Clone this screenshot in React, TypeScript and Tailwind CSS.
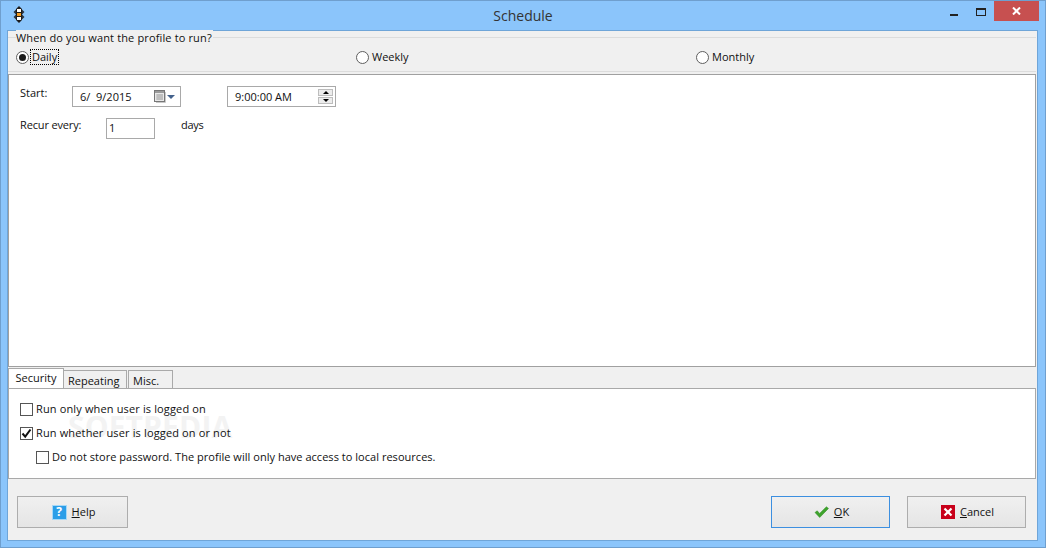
import React from 'react';

const font = "font-['Open_Sans','Noto_Sans',sans-serif]";

const Radio = ({ label, checked, focused, className }: { label: string; checked?: boolean; focused?: boolean; className?: string }) => (
  <div className={`flex items-center gap-[2px] ${className ?? ''}`}>
    <div className="w-[13px] h-[13px] rounded-full border border-[#5f5f5f] bg-white flex items-center justify-center shrink-0">
      {checked && <div className="w-[7px] h-[7px] rounded-full bg-[#1a1a1a]" />}
    </div>
    <span className={`px-[1px] leading-[14px] ${focused ? 'outline-1 outline-dotted outline-black' : ''}`}>{label}</span>
  </div>
);

const Checkbox = ({ label, checked, className }: { label: string; checked?: boolean; className?: string }) => (
  <div className={`relative z-10 flex items-center gap-[3px] h-[14px] ${className ?? ''}`}>
    <div className="w-[13px] h-[13px] border border-[#555] bg-white flex items-center justify-center shrink-0">
      {checked && (
        <svg width="11" height="11" viewBox="0 0 11 11">
          <path d="M1.5 5.5 L4.2 8.6 L9.5 1.5" fill="none" stroke="#111" strokeWidth="2" />
        </svg>
      )}
    </div>
    <span>{label}</span>
  </div>
);

const AppIcon = () => (
  <svg width="12" height="17" viewBox="0 0 12 17">
    <path d="M6 0 L9 3 L9 14 L6 17 L3 14 L3 3 Z" fill="#1c1c1c" />
    <path d="M0.5 6 L3 3.5 L3 8.5 Z M11.5 6 L9 3.5 L9 8.5 Z M0.5 11 L3 8.5 L3 13.5 Z M11.5 11 L9 8.5 L9 13.5 Z" fill="#2a3440" />
    <rect x="4" y="3" width="4" height="3" fill="#fff" />
    <rect x="4" y="7" width="4" height="3" fill="#f39a1e" />
    <rect x="4" y="11" width="4" height="3" fill="#fff" />
  </svg>
);

const CalendarIcon = () => (
  <svg width="12" height="13" viewBox="0 0 12 13">
    <rect x="0.5" y="0.5" width="10" height="11" fill="#e8e8e8" stroke="#777" />
    <rect x="1" y="1" width="9" height="2" fill="#9a9a9a" />
    <path d="M2 5 H9 M2 7 H9 M2 9 H9 M4 4 V10 M6 4 V10 M8 4 V10" stroke="#b0b0b0" strokeWidth="1" />
    <path d="M11.5 2 V12.5 H2" fill="none" stroke="#c8c8c8" />
  </svg>
);

const HelpIcon = () => (
  <div className="w-[15px] h-[15px] bg-[#2b9ee8] border border-[#a6d8f7] flex items-center justify-center text-white text-[12px] font-bold leading-none">?</div>
);

const CheckIcon = () => (
  <svg width="15" height="12" viewBox="0 0 15 12">
    <path d="M1 6.5 L3.2 4.8 L5.6 7.4 L12.4 0.8 L14.5 2.4 L5.7 11.5 Z" fill="#3ea32c" stroke="#2f8a20" strokeWidth="0.5" />
  </svg>
);

const CancelIcon = () => (
  <div className="w-[14px] h-[14px] bg-[#c8001a] flex items-center justify-center">
    <svg width="10" height="10" viewBox="0 0 10 10">
      <path d="M1.5 1.5 L8.5 8.5 M8.5 1.5 L1.5 8.5" stroke="#fff" strokeWidth="2.2" />
    </svg>
  </div>
);

const Spinner = () => (
  <div className="flex flex-col gap-[1px] w-[15px]">
    <div className="h-[7px] bg-[#ececec] border border-[#bdbdbd] flex items-center justify-center">
      <div className="w-0 h-0 border-x-[3px] border-x-transparent border-b-[3px] border-b-black" />
    </div>
    <div className="h-[7px] bg-[#ececec] border border-[#bdbdbd] flex items-center justify-center">
      <div className="w-0 h-0 border-x-[3px] border-x-transparent border-t-[3px] border-t-black" />
    </div>
  </div>
);

const ActionButton = ({ icon, letter, rest, className }: { icon: React.ReactNode; letter: string; rest: string; className?: string }) => (
  <div className={`h-[32px] flex items-center justify-center gap-[5px] pl-[2px] border bg-gradient-to-b from-[#f0f0f0] to-[#e5e5e5] ${className ?? ''}`}>
    {icon}
    <span><span className="underline">{letter}</span>{rest}</span>
  </div>
);

export default function App() {
  return (
    <div className={`${font} relative w-[1046px] h-[548px] bg-[#8bc5fb] border border-[#6f9fce] flex flex-col text-[11px] text-[#111] overflow-hidden`}>
      {/* Title bar */}
      <div className="h-[29px] shrink-0 flex items-start pl-[12px] pr-[6px]">
        <div className="mt-[5px]"><AppIcon /></div>
        <div className="flex-1 text-center text-[14px] leading-[30px] text-[#333] pl-[71px]">Schedule</div>
        <div className="flex items-start">
          <div className="w-[8px] h-[2px] bg-[#222] mt-[13px] mr-[18px]" />
          <div className="w-[10px] h-[8px] border border-[#222] border-t-2 mt-[7px] mr-[8px]" />
          <div className="w-[45px] h-[20px] bg-[#c75050] flex items-center justify-center">
            <svg width="9" height="8" viewBox="0 0 9 8">
              <path d="M1 0.5 L8 7.5 M8 0.5 L1 7.5" stroke="#fff" strokeWidth="2" />
            </svg>
          </div>
        </div>
      </div>

      {/* Client area */}
      <div className="w-[1031px] h-[511px] ml-[6px] bg-[#f0f0f0] border border-[#6fa5d8] flex flex-col">
        {/* Run frequency group */}
        <div className="mt-[6px] h-[35px] mr-[1px] border-y border-[#dcdcdc] shrink-0">
          <div className="-mt-[8px] ml-[8px] w-fit pr-[1px] leading-[16px] tracking-[0.14px] bg-[#f0f0f0]">When do you want the profile to run?</div>
          <div className="flex items-center mt-[4px] pl-[8px]">
            <Radio label="Daily" checked focused className="w-[340px]" />
            <Radio label="Weekly" className="w-[340px]" />
            <Radio label="Monthly" />
          </div>
        </div>

        {/* Start panel */}
        <div className="mt-[2px] mr-[1px] h-[293px] shrink-0 bg-white border border-[#a0a0a0] pl-[11px] pt-[11px]">
          <div className="flex items-start">
            <span className="w-[52px] leading-[14px]">Start:</span>
            <div className="w-[109px] h-[21px] border border-[#a9a9a9] flex items-center justify-between pl-[7px] pr-[5px]">
              <span className="pt-[1px]">6/&nbsp;&nbsp;9/2015</span>
              <div className="flex items-center gap-[1px]">
                <CalendarIcon />
                <div className="w-0 h-0 border-x-[4px] border-x-transparent border-t-[4px] border-t-[#44628c]" />
              </div>
            </div>
            <div className="ml-[46px] w-[109px] h-[21px] border border-[#a9a9a9] flex items-center justify-between pl-[7px] pr-[2px]">
              <span className="pt-[1px]">9:00:00 AM</span>
              <Spinner />
            </div>
          </div>
          <div className="flex items-start mt-[11px]">
            <span className="w-[86px] leading-[14px] tracking-[-0.15px]">Recur every:</span>
            <div className="w-[49px] h-[21px] border border-[#a9a9a9] flex items-center pl-[2px]">1</div>
            <span className="ml-[26px] leading-[14px] tracking-[-0.3px]">days</span>
          </div>
        </div>

        {/* Tabs */}
        <div className="flex items-end h-[21px] mt-[1px] shrink-0 -mb-[1px] relative">
          <div className="w-[56px] h-[21px] bg-white border border-b-0 border-[#a9a9a9] text-center leading-[18px]">Security</div>
          <div className="w-[63px] h-[19px] bg-[#f0f0f0] border border-[#a9a9a9] border-l-0 pl-[4px] leading-[19px]">Repeating</div>
          <div className="w-[45px] h-[19px] ml-[1px] bg-[#f0f0f0] border border-[#a9a9a9] pl-[4px] leading-[19px]">Misc.</div>
        </div>
        <div className="mr-[1px] h-[91px] shrink-0 bg-white border border-[#a9a9a9] pl-[11px] pt-[13px] flex flex-col gap-[10px] relative">
          <Checkbox label="Run only when user is logged on" className="tracking-[0.14px]" />
          <Checkbox label="Run whether user is logged on or not" checked className="tracking-[0.14px]" />
          <Checkbox label="Do not store password. The profile will only have access to local resources." className="ml-[16px] tracking-[0.03px]" />
          {/* Watermark sits behind the labels */}
          <div className="absolute left-[59px] top-[23px] text-[30px] font-bold leading-[30px] text-[#f3f3f3] tracking-[0.2px]">SOFTPEDIA</div>
        </div>

        {/* Footer buttons */}
        <div className="flex items-start justify-between mt-[17px] pl-[9px] pr-[11px]">
          <ActionButton icon={<HelpIcon />} letter="H" rest="elp" className="w-[111px] border-[#adadad]" />
          <div className="flex gap-[17px]">
            <ActionButton icon={<CheckIcon />} letter="O" rest="K" className="w-[119px] border-[#3c8fe0]" />
            <ActionButton icon={<CancelIcon />} letter="C" rest="ancel" className="w-[119px] border-[#adadad]" />
          </div>
        </div>
      </div>
    </div>
  );
}
